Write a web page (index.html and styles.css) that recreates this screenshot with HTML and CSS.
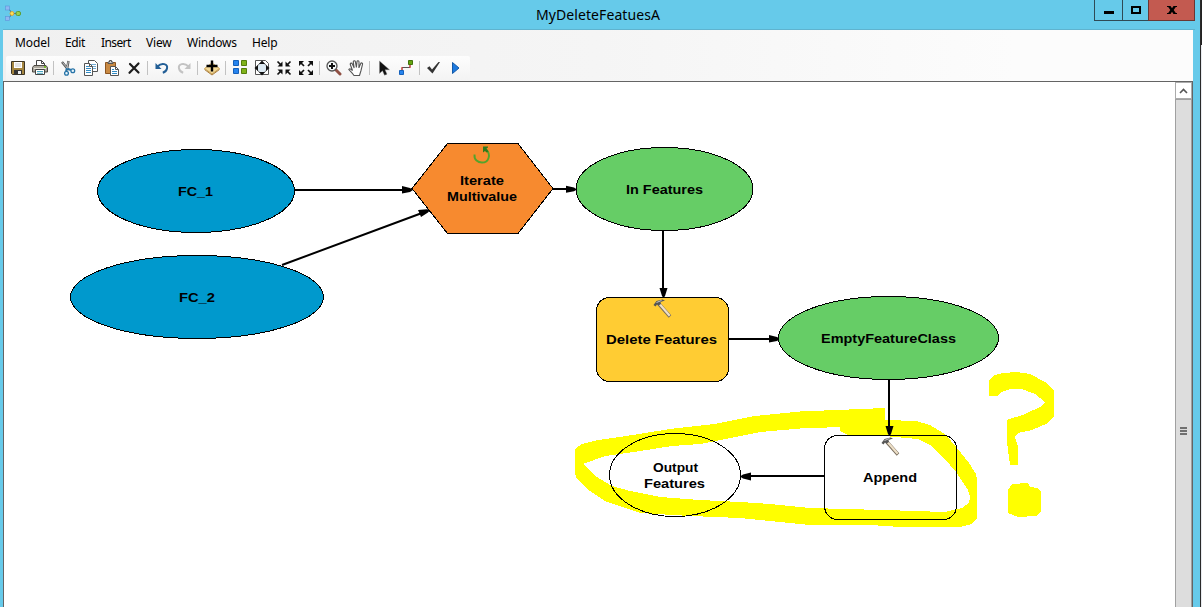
FILE: index.html
```html
<!DOCTYPE html>
<html lang="en">
<head>
    <meta charset="UTF-8">
    <meta name="viewport" content="width=device-width, initial-scale=1.0">
    <title>MyDeleteFeatuesA</title>
    <link rel="stylesheet" href="styles.css">
</head>
<body>
<div class="window">
    <div class="titlebar">
        <svg class="app-icon" width="18" height="18" viewBox="0 0 18 18">
            <path d="M4 3l4 5M4 14l4-5M8 8.500h5" stroke="#3b6b8c" fill="none"/>
            <rect x="1.500" y="1" width="4" height="4" fill="#8fb8f2" stroke="#5a94da" stroke-width=".6"/>
            <rect x="1.500" y="11.500" width="4" height="4" fill="#8fb8f2" stroke="#5a94da" stroke-width=".6"/>
            <circle cx="8" cy="8.500" r="1.900" fill="#ffe45c" stroke="#e0a52c"/>
            <rect x="12" y="6.500" width="4.500" height="4" rx="1.500" fill="#9bd04e" stroke="#5d9e34"/>
        </svg>
        <span class="title">MyDeleteFeatuesA</span>
        <div class="controls">
            <div class="control min"><svg width="10" height="3"><rect width="10" height="3"/></svg></div>
            <div class="control max"><svg width="10" height="8"><path d="M1 1h8v6H1z" fill="none" stroke="#000" stroke-width="2"/></svg></div>
            <div class="control close"><svg width="10" height="8" viewBox="0 0 10 8"><path d="M0 0h3.500L5 2.300 6.500 0H10v1H8.800L6.700 4l2.100 3H10v1H6.500L5 5.700 3.500 8H0V7h1.200l2.100-3-2.100-3H0z"/></svg></div>
        </div>
    </div>

    <div class="client">
        <div class="menubar">
            <span class="menu model">Model</span>
            <span class="menu edit">Edit</span>
            <span class="menu insert">Insert</span>
            <span class="menu view">View</span>
            <span class="menu windows">Windows</span>
            <span class="menu help">Help</span>
        </div>

        <div class="toolbar">
            <!-- save -->
            <div class="tool"><svg width="16" height="16"><path d="M1.500 1.500h13v13h-12l-1-1z" fill="#a4853f" stroke="#3b3425"/><path d="M4 2h8v6H4z" fill="#fff"/><path d="M5 4h6M5 6h6" stroke="#c9c9c9"/><path d="M4 10h8v4H4z" fill="#333"/><path d="M8 11h3v3H8z" fill="#eee"/></svg></div>
            <!-- print -->
            <div class="tool"><svg width="16" height="16"><path d="M4.500 6V.5h5l3 3V6" fill="#fff" stroke="#444"/><path d="M9.500.5v3h3" fill="none" stroke="#444"/><path d="M2 5.500h12l1.500 2v4.500H.5V7.500z" fill="#ada99f" stroke="#4c4942"/><path d="M2 8.500h12" stroke="#e9e6dc"/><path d="M12 7h2" stroke="#74b82c" stroke-width="2"/><path d="M3.500 9.500h9v5h-9z" fill="#fff" stroke="#444"/><path d="M5 11.500h6M5 13.300h6" stroke="#4ba5bf"/></svg></div>
            <div class="separator"></div>
            <!-- cut -->
            <div class="tool"><svg width="16" height="16"><path d="M2 2l6.500 8M8.500 1L7 9" stroke="#555" stroke-width="2.400"/><path d="M2.500 2.500l6 7M8.300 1.500L7 8" stroke="#ddd" stroke-width=".8"/><path d="M7 8l-1 3M8 9l3 1" stroke="#2874a8" stroke-width="2"/><circle cx="6.500" cy="13.300" r="1.900" fill="#e8f5fb" stroke="#2874a8" stroke-width="1.300"/><circle cx="12.800" cy="10.800" r="1.900" fill="#e8f5fb" stroke="#2874a8" stroke-width="1.300"/></svg></div>
            <!-- copy -->
            <div class="tool"><svg width="16" height="16"><path d="M6.500.5h6l3 3v8h-9z" fill="#fff" stroke="#555"/><path d="M8 4.500h6M8 6.500h6M8 8.500h6" stroke="#70abd4"/><path d="M2.500 3.500h5l3 3v9h-8z" fill="#fff" stroke="#555"/><path d="M7.500 3.500v3h3" fill="none" stroke="#555"/><path d="M4 6.500h3M4 8.500h5M4 10.500h5M4 12.500h5" stroke="#328bc4"/></svg></div>
            <!-- paste -->
            <div class="tool"><svg width="16" height="16"><path d="M1.500 2.500h10v11h-10z" fill="#c98a43" stroke="#8c5520"/><path d="M4 3.500V2h1.500V.5h2V2H9v1.500z" fill="#ccc" stroke="#555"/><path d="M6.500 6.500h5l3 3v6h-8z" fill="#fff" stroke="#555"/><path d="M11.500 6.500v3h3" fill="none" stroke="#555"/><path d="M8 9.500h2M8 11.500h5M8 13.500h5" stroke="#328bc4"/></svg></div>
            <!-- delete -->
            <div class="tool"><svg width="16" height="16"><path d="M4 4l8.500 8.500M12.500 3.500L3.500 12.800" stroke="#1d1d1d" stroke-width="2.200" stroke-linecap="round"/></svg></div>
            <div class="separator"></div>
            <!-- undo -->
            <div class="tool"><svg width="16" height="16"><path d="M3.500 6.500C8 2 14 4 13 8.500c-.5 2.200-2.300 3.700-4.200 4.300" fill="none" stroke="#235f96" stroke-width="2"/><path d="M1.500 3v6h6z" fill="#235f96"/></svg></div>
            <!-- redo -->
            <div class="tool"><svg width="16" height="16"><path d="M12.500 6.500C8 2 2 4 3 8.500c.5 2.200 2.300 3.700 4.200 4.300" fill="none" stroke="#c3c3c3" stroke-width="2"/><path d="M14.500 3v6h-6z" fill="#c3c3c3"/></svg></div>
            <div class="separator"></div>
            <!-- add data -->
            <div class="tool"><svg width="16" height="16"><path d="M.5 8.500L8 3l7.500 5.500L8 14z" fill="#f3d998" stroke="#c9a050"/><path d="M.5 9.500L8 15l7.500-5.500" fill="none" stroke="#a97b38"/><path d="M8 .5v11M2.500 6h11" stroke="#000" stroke-width="2.400"/></svg></div>
            <div class="separator"></div>
            <!-- auto layout -->
            <div class="tool"><svg width="16" height="16"><path d="M1.500.5h5v5h-5zM1.500 8.500h5v5h-5z" fill="#2684ee" stroke="#1560ba"/><path d="M9.500.5h5v5h-5zM9.500 8.500h5v5h-5z" fill="#80b31a" stroke="#557d0c"/></svg></div>
            <!-- full extent -->
            <div class="tool"><svg width="16" height="16"><path d="M1.500.5h10l3 3v11h-13z" fill="#fff" stroke="#555"/><circle cx="8" cy="8" r="5" fill="#dce9f2" stroke="#666"/><path d="M8 .5L11 4H5zM8 15.500L5 12h6zM.5 8L4 5v6zM15.500 8L12 11V5z" fill="#111"/></svg></div>
            <!-- fixed zoom in -->
            <div class="tool"><svg width="16" height="16"><path d="M6.500 6.500h-5l5-5zM9.500 6.500v-5l5 5zM6.500 9.500v5l-5-5zM9.500 9.500h5l-5 5z" fill="#111"/><path d="M1.500 1.500l4 4M14.500 1.500l-4 4M1.500 14.500l4-4M14.500 14.500l-4-4" stroke="#111" stroke-width="1.700"/></svg></div>
            <!-- fixed zoom out -->
            <div class="tool"><svg width="16" height="16"><path d="M1 1h5L1 6zM15 1v5l-5-5zM1 15v-5l5 5zM15 15h-5l5-5z" fill="#111"/><path d="M2 2l4 4M14 2l-4 4M2 14l4-4M14 14l-4-4" stroke="#111" stroke-width="1.700"/></svg></div>
            <div class="separator"></div>
            <!-- zoom in -->
            <div class="tool"><svg width="16" height="16"><path d="M10 10l4 4" stroke="#905044" stroke-width="3" stroke-linecap="round"/><circle cx="6" cy="6" r="5" fill="#f5f9fa" stroke="#555" stroke-width="1.300"/><path d="M6 3v6M3 6h6" stroke="#111" stroke-width="2"/></svg></div>
            <!-- pan -->
            <div class="tool"><svg width="16" height="16"><path d="M6 15.500C4 12.500 2 11 .8 9.500c.8-1.200 2-.7 3.700 1L2.300 4.500C2 3 3.800 2.500 4.400 4l1.800 4L5.300 2C5.200.5 7 .2 7.400 1.700l1 5.800L9 1.700C9.200.3 11 .4 11 1.900l-.1 6 1.700-4.200c.6-1.300 2.300-.8 1.900.7L13 10.500l-1.500 5z" fill="#fff" stroke="#555" stroke-width="1.100"/></svg></div>
            <div class="separator"></div>
            <!-- select -->
            <div class="tool"><svg width="16" height="16"><path d="M3.500 1v12.500l3-2.800 2 4.500 2.500-1-2-4.400h4.500z" fill="#111" stroke="#888" stroke-width=".4"/></svg></div>
            <!-- connect -->
            <div class="tool"><svg width="16" height="16"><path d="M4 10V7.500h8V5" fill="none" stroke="#555"/><path d="M4 10V7M12 8V5" stroke="#e33"/><path d="M1.500 10.500h4v4h-4z" fill="#2684ee" stroke="#1560ba"/><path d="M10.500.5h4v4h-4z" fill="#64a510" stroke="#41720a"/></svg></div>
            <div class="separator"></div>
            <!-- validate -->
            <div class="tool"><svg width="16" height="16"><path d="M1 8l2.500-1.700L6 9.500 12.500 2H14L6.500 13.500z" fill="#333"/></svg></div>
            <!-- run -->
            <div class="tool"><svg width="16" height="16"><path d="M4.500 2.500v11L11 8z" fill="#1c79df" stroke="#1259a8"/></svg></div>
        </div>

        <div class="workspace">
            <svg class="model-canvas" viewBox="4 82 1171 525">
                <!-- highlighter marks -->
                <g class="marker">
                    <path fill-rule="evenodd" d="M575 449L582 444 598 440 620 437 670 429 714 424 755 416 800 411.500 885 408 885 420 916 421 930 425 945 434 957 448 969 463 976 474 977 480 977 518 972 524 960 527 909 527.500 870 525 810 525 790 523 740 518 690 516 640 513 625 508 605 501 590 491 577 479 575 473z
                        M583 464L595 476 612 486 630 491 660 497 700 500 740 502 770 504 810 508 846 509 900 510.500 945 512 962 508 969 503 970 497 968 490 956 472 945 459 930 445 918 439 890 436.500 848 435 840 431 840 427 800 428.500 760 432 730 438 700 444 672 446 640 451 605 456z"/>
                    <path d="M989 380L995 375 1003 373 1016 372 1030 374 1045 382 1054 390 1054 416 1046 424 1032 430 1018 433 1015 437 1018 446 1018 465 1010 465 1007 442 1007 420 1025 414 1040 407 1045 402 1035 394 1022 389 1010 389 1002 392 997 396 989 396z"/>
                    <path d="M1008 490L1012 484 1028 483 1030 487 1038 488 1041 492 1041 512 1036 516 1018 517 1008 513z"/>
                </g>

                <!-- connectors -->
                <g class="link">
                    <path d="M295 190H404M282 265L422 213M553 189H568M663 231V289M729 339H770M889 380V427M824 476H749"/>
                </g>
                <g class="arrow">
                    <path d="M413 190l-3-2-8-2v7.500l8-1.500zM430 210l-3-.8-9 .8 3 7 7-4.500zM577 189.500l-3-2-8-1.800v7l8-1.500zM663.500 298l-1.500-2-2.500-8h8l-2.500 8zM780 339l-3-2-8-2v7.500l8-1.500zM889.500 436l-1.500-2-2.500-8h8l-2.500 8zM740 476.500l3-2 8-2v8l-8-2z"/>
                </g>

                <!-- nodes -->
                <g class="node">
                    <ellipse class="input" cx="196" cy="191" rx="98.500" ry="41.500"/>
                    <ellipse class="input" cx="197" cy="297" rx="126.500" ry="41.500"/>
                    <path class="iterator" d="M412 188.500L447.500 143.500H518L553 188.500 518 233.500H447.500z"/>
                    <ellipse class="derived" cx="664.500" cy="189" rx="88.500" ry="41.500"/>
                    <rect class="process" x="596.500" y="297.500" width="132" height="84" rx="13"/>
                    <ellipse class="derived" cx="888.500" cy="338" rx="110" ry="41.500"/>
                    <rect class="empty" x="824.500" y="435.500" width="132" height="84" rx="13"/>
                    <ellipse class="empty" cx="675" cy="475" rx="65.500" ry="41.500"/>
                </g>

                <!-- iterator and tool badges -->
                <path d="M474.500 154.500C474 160 478 162.500 482 162.500c7 0 9-8 4.500-12.500" fill="none" stroke="#54a32b" stroke-width="1.900"/>
                <path d="M483 146.500h5v1l-1.500 1 2 3-2 1-1.500-1.500-2 1.500z" fill="#2f7a1c"/>
                <defs>
                    <g id="hammer">
                        <path d="M5 4.500l11.500 13" stroke="#776b5b" stroke-width="3.400"/>
                        <path d="M6 5l10.200 11.700" stroke="#eee0c8" stroke-width="2.200"/>
                        <path d="M0 6l3-4 6-1.500 2.500 1L7 3l.5 2L5 6.500 3.500 5.500 2 7.500z" fill="#555"/>
                        <path d="M3 3.500l5-2" stroke="#c8c8c8"/>
                    </g>
                </defs>
                <use href="#hammer" x="653.500" y="299"/>
                <use href="#hammer" x="881.500" y="437"/>

                <g class="label">
                    <text x="178" y="196" textLength="35" lengthAdjust="spacingAndGlyphs">FC_1</text>
                    <text x="179" y="302" textLength="36" lengthAdjust="spacingAndGlyphs">FC_2</text>
                    <text x="460" y="185" textLength="44" lengthAdjust="spacingAndGlyphs">Iterate</text>
                    <text x="447" y="201" textLength="70" lengthAdjust="spacingAndGlyphs">Multivalue</text>
                    <text x="626" y="194" textLength="77" lengthAdjust="spacingAndGlyphs">In Features</text>
                    <text x="606" y="344" textLength="111" lengthAdjust="spacingAndGlyphs">Delete Features</text>
                    <text x="821" y="343" textLength="135" lengthAdjust="spacingAndGlyphs">EmptyFeatureClass</text>
                    <text x="653" y="472" textLength="45" lengthAdjust="spacingAndGlyphs">Output</text>
                    <text x="644" y="488" textLength="61" lengthAdjust="spacingAndGlyphs">Features</text>
                    <text x="863" y="482" textLength="54" lengthAdjust="spacingAndGlyphs">Append</text>
                </g>
            </svg>
            <div class="scrollbar">
                <div class="scroll-up"><svg width="9" height="6"><path d="M1 5l3.500-3.500L8 5" fill="none" stroke="#555" stroke-width="1.600"/></svg></div>
                <div class="thumb"><div class="grip"></div></div>
            </div>
        </div>
    </div>
</div>
</body>
</html>
```
FILE: styles.css
```css
html, body {
    margin: 0;
    padding: 0;
    height: 100%;
    overflow: hidden;
}
body {
    background: linear-gradient(#222 45px, #e8ebf0 45px);
    font-family: "Noto Sans", "Open Sans", sans-serif;
    color: #000;
}
.window {
    display: flex;
    flex-direction: column;
    width: 1200px;
    height: 100%;
    background: #66caea;
    border-right: 1px solid #2a2a2a;
}
.titlebar {
    display: flex;
    justify-content: space-between;
    height: 29px;
    border-bottom: 1px solid #5fb3cf;
    margin: 0 5px 0 3px;
}
.app-icon {
    margin: 5px 0 0 1px;
    width: 18px;
}
.title {
    margin-left: 80px;
    font-size: 14px;
    line-height: 29px;
    letter-spacing: 0.08px;
}
.controls {
    display: flex;
    height: 21px;
}
.control {
    display: flex;
    justify-content: center;
    align-items: center;
    box-sizing: border-box;
    width: 28px;
    border: 1px solid #2f4a55;
    border-top: none;
    border-right: none;
}
.min {
    padding-top: 5px;
}
.max {
    width: 26px;
}
.close {
    width: 47px;
    background: #c35a50;
    border: 1px solid #6a3733;
    border-top: none;
}
.client {
    display: flex;
    flex-direction: column;
    flex: 1;
    min-height: 0;
    margin: 0 7px 0 3px;
    background: linear-gradient(to right, #f0f0f0, #f5f5f5 50%, #fcfcfc 85%);
}
.menubar {
    display: flex;
    height: 26px;
    padding-left: 12px;
    font-size: 12px;
    line-height: 26px;
    letter-spacing: -0.2px;
    white-space: nowrap;
}
.model {
    width: 50px;
    letter-spacing: -0.1px;
}
.edit {
    width: 36px;
    letter-spacing: -0.4px;
}
.insert {
    width: 45px;
    letter-spacing: -0.6px;
}
.view {
    width: 41px;
}
.windows {
    width: 65px;
}
.toolbar {
    display: flex;
    align-items: center;
    box-sizing: border-box;
    width: 464px;
    height: 25px;
    margin-left: 3px;
    padding: 0 0 2px 1px;
    background: linear-gradient(#fdfdfd, #f3f3f3);
    border-radius: 2px;
}
.tool {
    display: flex;
    justify-content: center;
    width: 22px;
}
.separator {
    width: 1px;
    height: 14px;
    margin: 0 3px 0 2px;
    background: #c2c2c2;
}
.workspace {
    display: flex;
    flex: 1;
    min-height: 0;
    background: #fff;
    border: 1px solid #646464;
    border-bottom: none;
}
.model-canvas {
    width: 1171px;
    height: 525px;
}
.marker {
    fill: #ff0;
    shape-rendering: crispEdges;
}
.link {
    stroke: #000;
    stroke-width: 2;
}
.node {
    stroke: #000;
    stroke-width: 1;
    shape-rendering: crispEdges;
}
.input {
    fill: #0099cd;
}
.iterator {
    fill: #f78a2f;
}
.derived {
    fill: #66cd66;
}
.process {
    fill: #ffcc33;
}
.empty {
    fill: none;
}
.label {
    font-family: "Liberation Sans", Arial, sans-serif;
    font-size: 13.5px;
    font-weight: bold;
}
.scrollbar {
    display: flex;
    flex-direction: column;
    box-sizing: border-box;
    width: 17px;
    background: #ddd;
}
.scroll-up {
    display: flex;
    justify-content: center;
    align-items: center;
    box-sizing: border-box;
    height: 17px;
    background: #fff;
    border: 1px solid #ababab;
}
.thumb {
    flex: 1;
    background: #ddd;
    border: 1px solid #a0a0a0;
    border-bottom: none;
}
.grip {
    width: 7px;
    height: 8px;
    margin: 327px auto 0 4px;
    background: repeating-linear-gradient(#707070 0 2px, #ddd 2px 3px);
}
```
